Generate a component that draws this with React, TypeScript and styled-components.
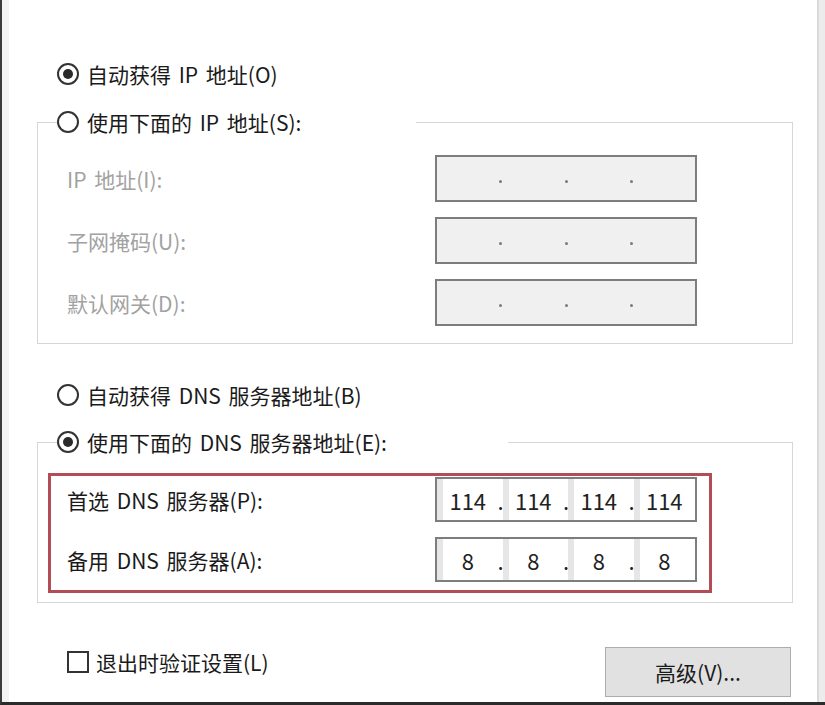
import React from "react";
import styled, { createGlobalStyle } from "styled-components";

const Global = createGlobalStyle`
  html, body { margin: 0; padding: 0; background: #fff; }
  body { font-family: "Noto Sans CJK SC", "Noto Sans", sans-serif; }
  * { box-sizing: border-box; }
`;

const Frame = styled.div`
  width: 825px;
  height: 705px;
  display: flex;
  border-left: 2px solid #3a3a3a;
  border-bottom: 3px solid #2b2b2b;
  background: #ececec;
  padding-right: 6px;
`;

const Content = styled.div`
  flex: 1;
  background: #fff;
  border-left: 7px solid #f2f2f2;
  border-right: 2px solid #dadada;
  padding: 61px 24px 0 28px;
  display: flex;
  flex-direction: column;
  font-size: 21px;
  line-height: 26px;
  color: #1a1a1a;
`;

const Option = styled.label<{ $indent?: number; $top?: number }>`
  display: flex;
  align-items: center;
  gap: 8px;
  white-space: nowrap;
  word-spacing: 3px;
  margin-left: ${(p) => p.$indent ?? 0}px;
  margin-top: ${(p) => p.$top ?? 0}px;
`;

const Radio = styled.span<{ $on?: boolean }>`
  width: 22px;
  height: 22px;
  flex: none;
  border-radius: 50%;
  border: 2px solid #333;
  background: #fff;
  display: flex;
  align-items: center;
  justify-content: center;
  &::after {
    content: "";
    width: 10px;
    height: 10px;
    border-radius: 50%;
    background: #2a2a2a;
    display: ${(p) => (p.$on ? "block" : "none")};
  }
`;

const Group = styled.fieldset<{ $top: number; $pad: string }>`
  margin: ${(p) => p.$top}px 0 0 0;
  padding: ${(p) => p.$pad};
  border: 1px solid #d6d6d6;
  min-width: 0;
`;

const Legend = styled.legend<{ $gap: number }>`
  margin-left: 19px;
  padding: 0 ${(p) => p.$gap}px 0 0;
  line-height: 26px;
`;

const FieldGrid = styled.div<{ $rowH: number; $indent?: number }>`
  display: grid;
  grid-template-columns: 368px 262px;
  grid-auto-rows: ${(p) => p.$rowH}px;
  row-gap: 15px;
  align-items: center;
  padding-left: ${(p) => p.$indent ?? 0}px;
`;

const FieldLabel = styled.span<{ $disabled?: boolean }>`
  color: ${(p) => (p.$disabled ? "#a2a2a2" : "#1a1a1a")};
  white-space: nowrap;
  word-spacing: 3px;
`;

const IpBox = styled.div<{ $disabled?: boolean }>`
  height: 100%;
  display: flex;
  align-items: stretch;
  border: 2px solid #7d7d7d;
  background: ${(p) => (p.$disabled ? "#f0f0f0" : "#fff")};
  font-size: 22px;
`;

const Octet = styled.span<{ $disabled?: boolean }>`
  flex: 1;
  display: flex;
  align-items: center;
  justify-content: center;
  color: #222;
  box-shadow: ${(p) => (p.$disabled ? "none" : "inset 6px 0 0 #e6e6e6")};
`;

const TextDot = styled.span`
  flex: none;
  width: 4px;
  display: flex;
  align-items: center;
  justify-content: center;
  color: #222;
`;

const GrayDot = styled.span`
  flex: none;
  width: 3px;
  height: 3px;
  border-radius: 50%;
  background: #7a7a7a;
  align-self: center;
  transform: translateY(3px);
`;

const RedBox = styled.div`
  width: 664px;
  margin-left: 10px;
  border: 3px solid #b24c55;
  padding: 1px 0 8px 16px;
`;

const Footer = styled.div`
  display: flex;
  justify-content: space-between;
  align-items: flex-start;
  margin-top: 44px;
  padding-left: 30px;
  padding-right: 2px;
`;

const CheckRow = styled.label`
  display: flex;
  align-items: center;
  gap: 7px;
  margin-top: 2px;
  white-space: nowrap;
`;

const CheckBox = styled.span`
  width: 22px;
  height: 22px;
  flex: none;
  border: 2px solid #333;
  background: #fff;
`;

const Button = styled.button`
  width: 186px;
  height: 50px;
  background: #e1e1e1;
  border: 1px solid #adadad;
  font: inherit;
  color: #1a1a1a;
  padding: 0;
`;

function IpField({ values, disabled }: { values?: string[]; disabled?: boolean }) {
  const parts = values ?? ["", "", "", ""];
  return (
    <IpBox $disabled={disabled}>
      {parts.map((v, i) => (
        <React.Fragment key={i}>
          {i > 0 && (disabled ? <GrayDot /> : <TextDot>.</TextDot>)}
          <Octet $disabled={disabled}>{v}</Octet>
        </React.Fragment>
      ))}
    </IpBox>
  );
}

export default function App() {
  return (
    <>
      <Global />
      <Frame>
        <Content>
          <Option $indent={20}>
            <Radio $on />
            自动获得 IP 地址(O)
          </Option>

          <Group $top={22} $pad="20px 0 17px 0">
            <Legend $gap={115}>
              <Option>
                <Radio />
                使用下面的 IP 地址(S):
              </Option>
            </Legend>
            <FieldGrid $rowH={47} $indent={29}>
              <FieldLabel $disabled>IP 地址(I):</FieldLabel>
              <IpField disabled />
              <FieldLabel $disabled>子网掩码(U):</FieldLabel>
              <IpField disabled />
              <FieldLabel $disabled>默认网关(D):</FieldLabel>
              <IpField disabled />
            </FieldGrid>
          </Group>

          <Option $indent={20} $top={38}>
            <Radio />
            自动获得 DNS 服务器地址(B)
          </Option>

          <Group $top={21} $pad="18px 0 9px 0">
            <Legend $gap={121}>
              <Option>
                <Radio $on />
                使用下面的 DNS 服务器地址(E):
              </Option>
            </Legend>
            <RedBox>
              <FieldGrid $rowH={45}>
                <FieldLabel>首选 DNS 服务器(P):</FieldLabel>
                <IpField values={["114", "114", "114", "114"]} />
                <FieldLabel>备用 DNS 服务器(A):</FieldLabel>
                <IpField values={["8", "8", "8", "8"]} />
              </FieldGrid>
            </RedBox>
          </Group>

          <Footer>
            <CheckRow>
              <CheckBox />
              退出时验证设置(L)
            </CheckRow>
            <Button>高级(V)...</Button>
          </Footer>
        </Content>
      </Frame>
    </>
  );
}
